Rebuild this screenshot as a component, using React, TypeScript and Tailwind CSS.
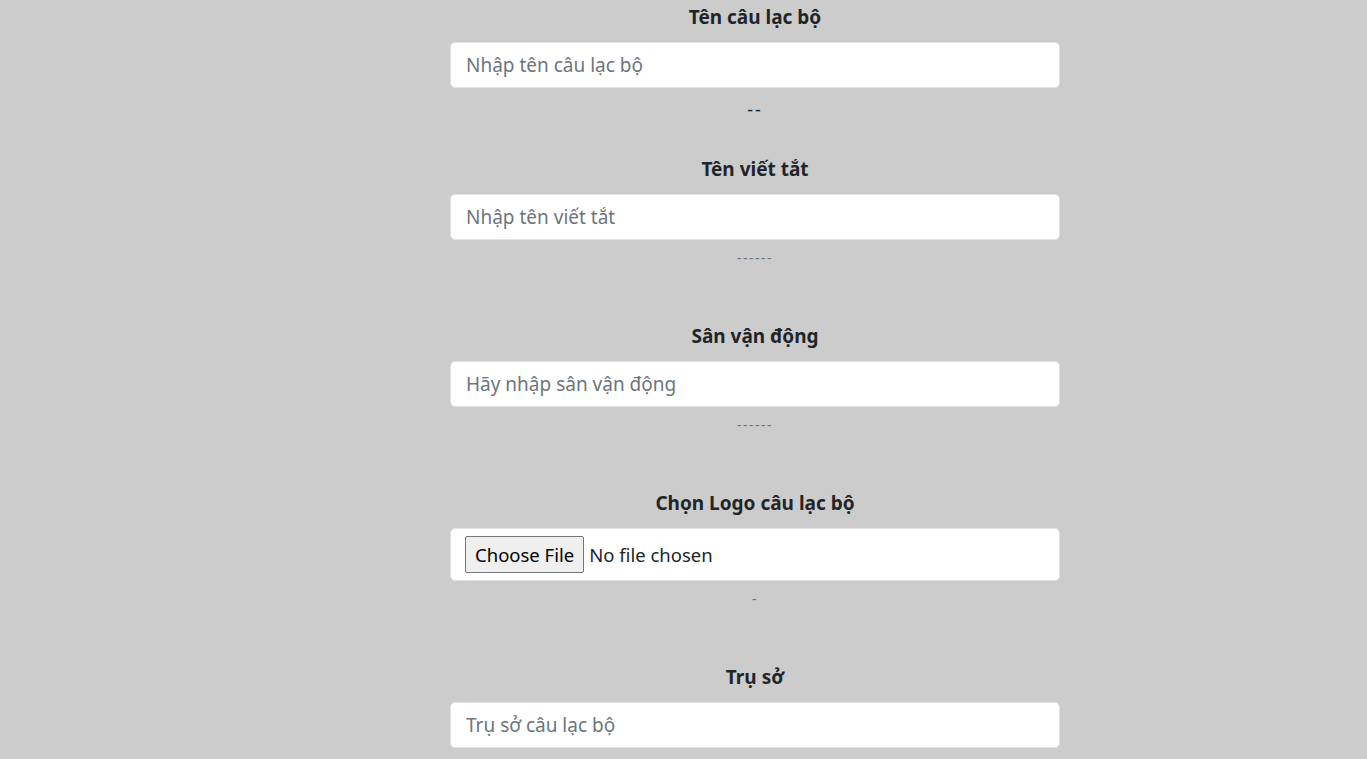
const font = { fontFamily: '"Noto Sans", "Open Sans", sans-serif' };

function Label({ children }: { children: string }) {
  return (
    <label className="block text-center text-[19px] leading-[24px] font-bold text-[#212529]">
      {children}
    </label>
  );
}

function TextField({ placeholder }: { placeholder: string }) {
  return (
    <input
      type="text"
      placeholder={placeholder}
      className="mt-[13px] block w-full h-[46px] pl-[15px] pr-4 rounded-[5px] border border-[#dee2e6] bg-white text-[19px] text-[#212529] placeholder:text-[#6c757d] outline-none"
      style={font}
    />
  );
}

function Hint({ text }: { text: string }) {
  return (
    <div className="mt-[8px] h-[20px] leading-[20px] text-center text-[14px] tracking-[1.5px] text-[#6c757d]">
      {text}
    </div>
  );
}

export default function App() {
  return (
    <div className="h-screen overflow-hidden bg-[#cccccc] pl-[143px]" style={font}>
      <form className="mx-auto w-[610px] pt-[5px]">
        {/* Tên câu lạc bộ */}
        <Label>Tên câu lạc bộ</Label>
        <TextField placeholder="Nhập tên câu lạc bộ" />
        <div className="mt-[10px] h-[22px] leading-[22px] text-center text-[18px] tracking-[2px] text-[#212529]">--</div>

        {/* Tên viết tắt */}
        <div className="mt-[37px]">
          <Label>Tên viết tắt</Label>
          <TextField placeholder="Nhập tên viết tắt" />
          <Hint text="------" />
        </div>

        {/* Sân vận động */}
        <div className="mt-[56px]">
          <Label>Sân vận động</Label>
          <TextField placeholder="Hãy nhập sân vận động" />
          <Hint text="------" />
        </div>

        {/* Logo */}
        <div className="mt-[56px]">
          <Label>Chọn Logo câu lạc bộ</Label>
          <div className="mt-[13px] flex items-center h-[53px] px-[14px] rounded-[5px] border border-[#dee2e6] bg-white">
            <span className="h-[37px] px-[9px] flex items-center border border-[#767676] rounded-[2px] bg-[#efefef] text-[18.5px] text-black">
              Choose File
            </span>
            <span className="ml-[5px] text-[18.5px] text-[#212529]">No file chosen</span>
          </div>
          <Hint text="-" />
        </div>

        {/* Trụ sở */}
        <div className="mt-[56px]">
          <Label>Trụ sở</Label>
          <TextField placeholder="Trụ sở câu lạc bộ" />
        </div>
      </form>
    </div>
  );
}
